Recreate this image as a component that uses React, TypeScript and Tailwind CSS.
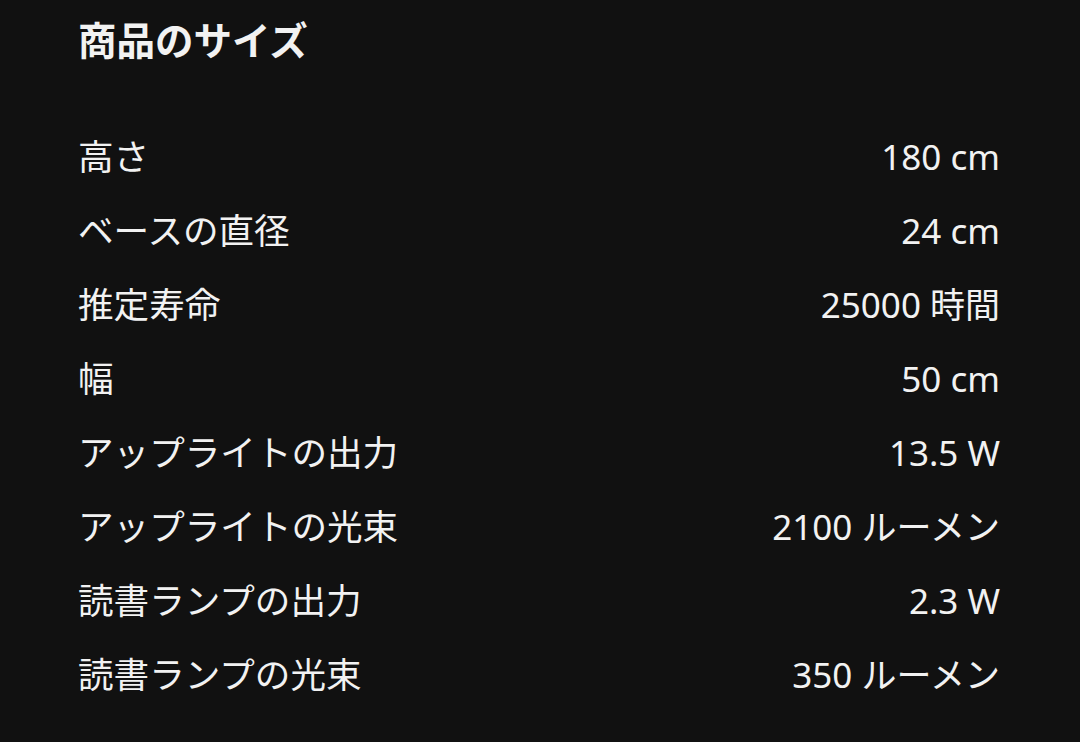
import React from "react";

const rows: [string, string][] = [
  ["高さ", "180 cm"],
  ["ベースの直径", "24 cm"],
  ["推定寿命", "25000 時間"],
  ["幅", "50 cm"],
  ["アップライトの出力", "13.5 W"],
  ["アップライトの光束", "2100 ルーメン"],
  ["読書ランプの出力", "2.3 W"],
  ["読書ランプの光束", "350 ルーメン"],
];

export default function App() {
  return (
    <div
      className="w-[1080px] h-[742px] bg-[#111111] text-[#f2f2f2] pl-[78px] pr-[80px] pt-[16px] overflow-hidden"
      style={{ fontFamily: '"Noto Sans", "Noto Sans CJK JP", sans-serif' }}
    >
      <h1 className="text-[38.5px] leading-[48px] font-bold">商品のサイズ</h1>
      <div className="mt-[56px] flex flex-col">
        {rows.map(([k, v]) => (
          <div key={k} className="h-[74px] flex items-center justify-between">
            <span className="text-[35.6px]">{k}</span>
            <span className="text-[35px]">{v}</span>
          </div>
        ))}
      </div>
    </div>
  );
}
